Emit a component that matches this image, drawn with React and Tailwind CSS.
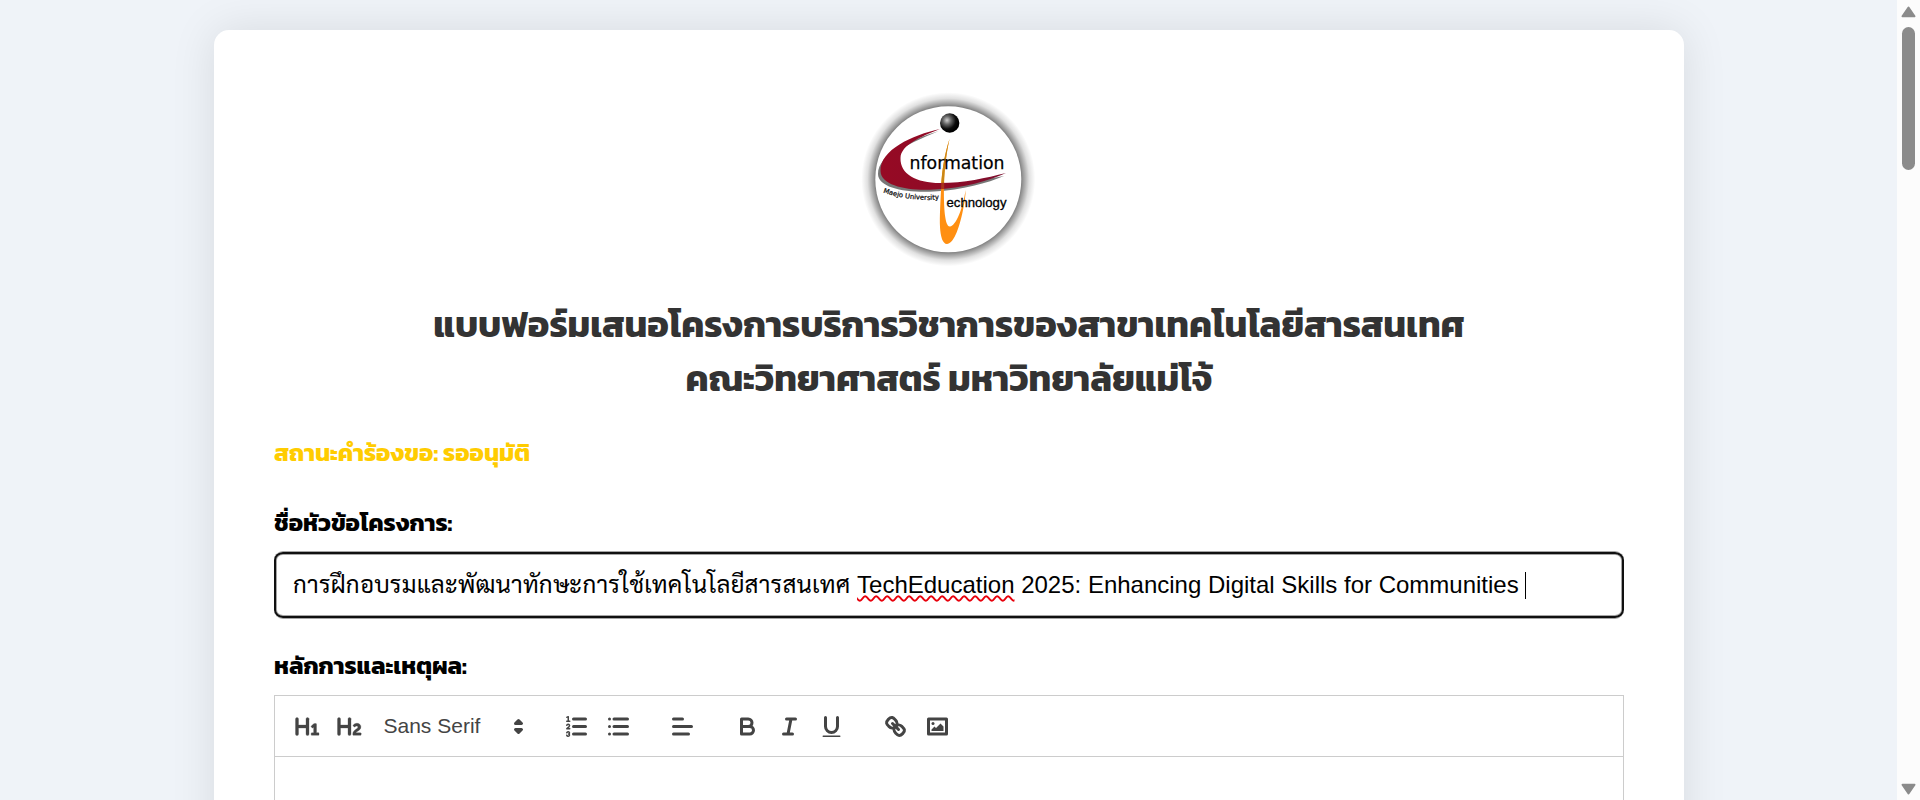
import React from "react";

const H = "M10,4V14a1,1,0,0,1-2,0V10H3v4a1,1,0,0,1-2,0V4A1,1,0,0,1,3,4V8H8V4a1,1,0,0,1,2,0Z";

function Icon({ children }) {
  return (
    <span className="flex h-9 w-[42px] items-center justify-center">
      <svg viewBox="0 0 18 18" className="size-[27px] fill-none stroke-[#444] stroke-2" strokeLinecap="round" strokeLinejoin="round">
        {children}
      </svg>
    </span>
  );
}

const solid = "fill-[#444] stroke-none";
const heading = "fill-[#444] stroke-[#444] stroke-[0.2px]";

function Toolbar() {
  return (
    <div className="flex h-[60px] items-center gap-[22.5px] pl-[11.5px]">
      <div className="flex">
        <Icon>
          <path className={heading} d={H} />
          <path className={heading} d="M16.06787,13.209H14.98975V7.59863a.54085.54085,0,0,0-.605-.60547h-.62744a1.01119,1.01119,0,0,0-.748.29688L11.645,8.56641a.5435.5435,0,0,0-.022.8584l.28613.30762a.53861.53861,0,0,0,.84717.0332l.09912-.08789a1.2137,1.2137,0,0,0,.2417-.35254h.02246s-.01123.30859-.01123.60547V13.209H12.041a.54085.54085,0,0,0-.605.60547v.43945a.54085.54085,0,0,0,.605.60547h4.02686a.54085.54085,0,0,0,.605-.60547v-.43945A.54085.54085,0,0,0,16.06787,13.209Z" />
        </Icon>
        <Icon>
          <path className={heading} d={H} />
          <path className={heading} d="M16.73975,13.81445v.43945a.54085.54085,0,0,1-.605.60547H11.855a.58392.58392,0,0,1-.64893-.60547V14.0127c0-2.90527,3.39941-3.42187,3.39941-4.55469a.77675.77675,0,0,0-.84717-.78125,1.17684,1.17684,0,0,0-.83594.38477c-.2749.26367-.561.374-.85791.13184l-.4292-.34082c-.30811-.24219-.38525-.51758-.1543-.81445a2.97155,2.97155,0,0,1,2.45361-1.17676,2.45393,2.45393,0,0,1,2.68408,2.40918c0,2.45312-3.1792,2.92676-3.27832,3.93848h2.79443A.54085.54085,0,0,1,16.73975,13.81445Z" />
        </Icon>
        <div className="flex h-9 w-[162px] items-center justify-between pl-[13px] pr-px font-['Liberation_Sans',sans-serif] text-[21px] text-[#444]">
          <span>Sans Serif</span>
          <svg viewBox="0 0 18 18" className="size-[27px] fill-[#444] stroke-[#444] stroke-2" strokeLinecap="round" strokeLinejoin="round">
            <polygon points="7 11 9 13 11 11" />
            <polygon points="7 7 9 5 11 7" />
          </svg>
        </div>
      </div>
      <div className="flex">
        <Icon>
          <path d="M7 4h8M7 9h8M7 14h8" />
          <path className="stroke-1" d="M2.5 5.5h2" />
          <path className={solid} d="M3.5,6A0.5,0.5,0,0,1,3,5.5V3.085l-0.276.138A0.5,0.5,0,0,1,2.053,3c-0.124-.247-0.023-0.324.224-0.447l1-.5A0.5,0.5,0,0,1,4,2.5v3A0.5,0.5,0,0,1,3.5,6Z" />
          <path className="stroke-1" d="M4.5,10.5h-2c0-.234,1.85-1.076,1.85-2.234A0.959,0.959,0,0,0,2.5,8.156" />
          <path className="stroke-1" d="M2.5,14.846a0.959,0.959,0,0,0,1.85-.109A0.7,0.7,0,0,0,3.75,14a0.688,0.688,0,0,0,.6-0.736,0.959,0.959,0,0,0-1.85-.109" />
        </Icon>
        <Icon>
          <path d="M6 4h9M6 9h9M6 14h9M3 4h0M3 9h0M3 14h0" />
        </Icon>
      </div>
      <Icon>
        <path d="M3 9h12M3 14h10M3 4h6" />
      </Icon>
      <div className="flex">
        <Icon>
          <path d="M5,4H9.5A2.5,2.5,0,0,1,12,6.5v0A2.5,2.5,0,0,1,9.5,9H5Z" />
          <path d="M5,9h5.5A2.5,2.5,0,0,1,13,11.5v0A2.5,2.5,0,0,1,10.5,14H5Z" />
        </Icon>
        <Icon>
          <path d="M7 4h6M5 14h6M8 14L10 4" />
        </Icon>
        <Icon>
          <path d="M5,3V9a4.012,4.012,0,0,0,4,4H9a4.012,4.012,0,0,0,4-4V3" />
          <rect className={solid} height="1" rx="0.5" width="12" x="3" y="15" />
        </Icon>
      </div>
      <div className="flex">
        <Icon>
          <path d="M7 7L11 11" />
          <path d="M8.9,4.577a3.476,3.476,0,0,1,.36,4.679A3.476,3.476,0,0,1,4.577,8.9C3.185,7.5,2.035,6.4,4.217,4.217S7.5,3.185,8.9,4.577Z" />
          <path d="M13.423,9.1a3.476,3.476,0,0,0-4.679-.36,3.476,3.476,0,0,0,.36,4.679c1.392,1.392,2.5,2.542,4.679.36S14.815,10.5,13.423,9.1Z" />
        </Icon>
        <Icon>
          <rect height="10" width="12" x="3" y="4" strokeLinejoin="round" />
          <circle className={solid} cx="6" cy="7" r="1" />
          <polyline className={solid} points="5 12 5 11 7 9 8 10 11 7 13 9 13 12 5 12" />
        </Icon>
      </div>
    </div>
  );
}

function Logo() {
  return (
    <svg viewBox="9 10 180 180" className="size-[180px]">
      <defs>
        <radialGradient id="halo" gradientUnits="userSpaceOnUse" cx="98.3" cy="99.3" r="87">
          <stop offset="0.82" stopColor="#000" stopOpacity="0.58" />
          <stop offset="0.86" stopColor="#000" stopOpacity="0.4" />
          <stop offset="0.93" stopColor="#000" stopOpacity="0.12" />
          <stop offset="1" stopColor="#000" stopOpacity="0" />
        </radialGradient>
        <radialGradient id="ball" cx="0.36" cy="0.36" r="0.6">
          <stop offset="0" stopColor="#d0d0d0" />
          <stop offset="0.35" stopColor="#666" />
          <stop offset="0.75" stopColor="#0c0c0c" />
          <stop offset="1" stopColor="#000" />
        </radialGradient>
        <linearGradient id="swoosh" x1="0" x2="1" y1="0" y2="0">
          <stop offset="0" stopColor="#960a24" />
          <stop offset="0.5" stopColor="#8f0a26" />
          <stop offset="1" stopColor="#7c1030" />
        </linearGradient>
        <path id="arc" d="M33 112.500Q60 122 95 119" />
      </defs>
      <circle cx="98.3" cy="99.3" r="87" fill="url(#halo)" />
      <circle cx="98.3" cy="99.3" r="73" fill="#fff" />
      <path d="M89 51C60 60 28 74 28 94C28 108 56 113 84 111.500C112 110 138 103 154 96C136 99 112 104 84 106C60 104 38 100 36 88C36 72 70 59 89 51Z" fill="#777" />
      <path d="M99.500 59C94 76 92 92 91.300 104C90.600 120 89.500 136 90 147C90.500 156 92.500 164 97 164C103 164 109 150 113 130C114.500 122 115.800 115 115.600 110C113 128 106 146 100 146.500C95 147 93.500 128 94 104C94.500 88 96.500 72 99.500 59Z" fill="#ff8f12" />
      <path d="M99.500 59C94 76 92 92 91.300 104H94C94.500 88 96.500 72 99.500 59Z" fill="#c98714" />
      <path d="M90 49C62 55 30 70 30.500 91C31 106 58 111 84 109.500C114 108 138 101 156 93C136 98 114 103 90 103C66 103 50 94 50.500 78C51 65 70 57 90 49Z" fill="url(#swoosh)" />
      <path d="M91.300 103L91 109.300L94.200 109L94.300 102.800Z" fill="#a8321c" />
      <circle cx="99.700" cy="43" r="9.700" fill="url(#ball)" />
      <text x="59.500" y="89.300" textLength="95" lengthAdjust="spacingAndGlyphs" className="fill-black stroke-black stroke-[0.25px] font-['DejaVu_Sans',sans-serif] text-[18.500px]">nformation</text>
      <text x="96.500" y="127.300" textLength="60" lengthAdjust="spacingAndGlyphs" className="fill-black stroke-black stroke-[0.3px] font-['Liberation_Sans',sans-serif] text-[13px]">echnology</text>
      <text className="fill-[#111] stroke-[#111] stroke-[0.25px] font-['DejaVu_Sans',sans-serif] text-[6.800px]">
        <textPath href="#arc">Maejo University</textPath>
      </text>
    </svg>
  );
}

function Label({ children }) {
  return <div className="h-9 text-2xl/9 font-bold text-black">{children}</div>;
}

export default function App() {
  return (
    <div className="flex h-[800px] overflow-hidden bg-[#eff3f8] font-['Kanit',sans-serif]">
      <main className="flex-1 pl-[214px] pt-[30px]">
        <section className="flex h-[900px] w-[1470px] flex-col rounded-[15px] bg-white px-[60px] pt-[60px] shadow-[0_0_45px_rgba(0,0,0,0.1)]">
          <div className="flex h-[180px] justify-center">
            <Logo />
          </div>
          <h1 className="mt-[27px] text-center text-4xl/[54px] font-bold text-[#333]">
            แบบฟอร์มเสนอโครงการบริการวิชาการของสาขาเทคโนโลยีสารสนเทศ
            <br />
            คณะวิทยาศาสตร์ มหาวิทยาลัยแม่โจ้
          </h1>
          <div className="mt-[30px] h-9 text-2xl/9 font-bold text-[#ffcc00]">สถานะคำร้องขอ: รออนุมัติ</div>
          <div className="mt-[34px]">
            <Label>ชื่อหัวข้อโครงการ:</Label>
          </div>
          <div className="mt-[10px] flex h-[68px] shrink-0 items-center rounded-[9px] border-y border-[#a5a5a5] px-[19px] font-['Liberation_Sans',sans-serif] text-2xl/[36px] text-black shadow-[inset_0_0_0_2px_#101010,inset_0_0_0_3px_#a5a5a5]">
            <p className="whitespace-pre">
              <span className="font-['Sarabun','Noto_Sans_Thai_Looped',sans-serif] leading-none tracking-[0.21px]">การฝึกอบรมและพัฒนาทักษะการใช้เทคโนโลยีสารสนเทศ</span>{" "}
              <span className="underline decoration-red-600 decoration-wavy decoration-[1.5px] underline-offset-[2px]">TechEducation</span> 2025: Enhancing Digital Skills for Communities{" "}
            </p>
            <span className="h-[27px] w-px bg-black" />
          </div>
          <div className="mt-[29px]">
            <Label>หลักการและเหตุผล:</Label>
          </div>
          <div className="mt-[11px] flex-1 border border-[#ccc]">
            <Toolbar />
            <div className="border-t border-[#ccc]" />
          </div>
        </section>
      </main>
      <aside className="flex w-[23px] flex-col items-center bg-[#fcfcfc] pt-[6px]">
        <svg viewBox="0 0 15 12" className="h-3 w-[15px]"><path d="M7.500 1.500L13.500 10.200H1.500Z" fill="#8b8b8b" stroke="#8b8b8b" strokeWidth="2" strokeLinejoin="round" /></svg>
        <div className="mt-[9px] h-[143px] w-[13px] rounded-full bg-[#8b8b8b]" />
        <svg viewBox="0 0 15 12" className="mb-[5px] mt-auto h-3 w-[15px]"><path d="M1.500 1.800H13.500L7.500 10.500Z" fill="#8b8b8b" stroke="#8b8b8b" strokeWidth="2" strokeLinejoin="round" /></svg>
      </aside>
    </div>
  );
}
